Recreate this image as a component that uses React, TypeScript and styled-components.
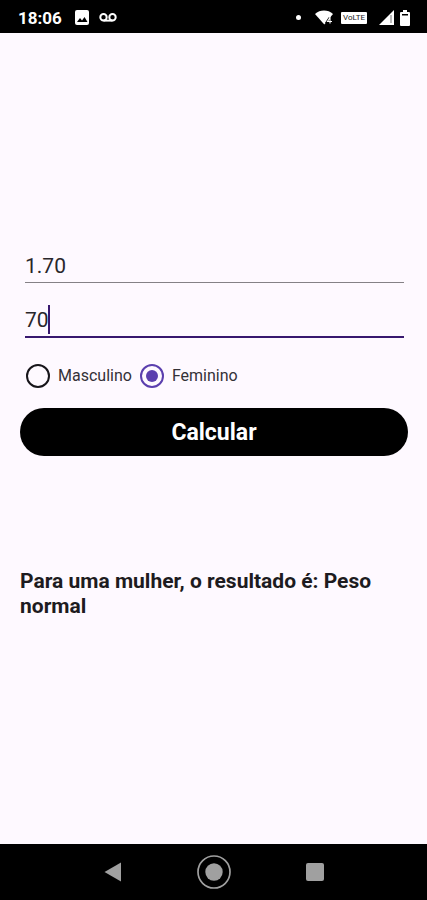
import { useState } from "react";
import styled, { createGlobalStyle } from "styled-components";

const GlobalStyle = createGlobalStyle`
  * { box-sizing: border-box; }
  body {
    margin: 0;
    background: #fef9ff;
    font-family: Roboto, "Liberation Sans", sans-serif;
    color: #1d1b20;
  }
`;

const Screen = styled.div`
  display: flex;
  flex-direction: column;
  min-height: 100vh;
`;

const StatusBar = styled.header`
  display: flex;
  align-items: center;
  justify-content: space-between;
  height: 33px;
  padding: 2px 17px 0 18px;
  background: #000;
  color: #fff;
`;

const StatusGroup = styled.div<{ $gap: number }>`
  display: flex;
  align-items: center;
  gap: ${({ $gap }) => $gap}px;

  svg { display: block; }
`;

const Clock = styled.time`
  font-size: 17px;
  font-weight: 700;
  line-height: 20px;
  margin-right: 3px;
`;

const Dot = styled.span`
  width: 5px;
  height: 5px;
  margin-right: 6px;
  border-radius: 50%;
  background: #fff;
`;

const NetworkBadge = styled.span`
  width: 26px;
  height: 12px;
  margin-right: 4px;
  border-radius: 1px;
  background: #fff;
  color: #222;
  font-size: 8px;
  line-height: 12px;
  text-align: center;
`;

const Form = styled.form`
  display: flex;
  flex: 1;
  flex-direction: column;
  padding: 216px 19px 0 20px;
`;

const Field = styled.div<{ $active?: boolean }>`
  position: relative;
  height: ${({ $active }) => ($active ? 55 : 34)}px;
  margin: 0 4px 0 5px;
  padding-top: ${({ $active }) => ($active ? 22 : 2)}px;
  border-bottom: ${({ $active }) => ($active ? "2px solid #38186f" : "1px solid #858186")};
  font-size: 21px;
  line-height: 31px;
`;

const TextInput = styled.input`
  display: block;
  width: 100%;
  height: 31px;
  padding: 0;
  border: 0;
  outline: 0;
  background: transparent;
  color: #29272b;
  caret-color: transparent;
  font: inherit;
`;

const Caret = styled.span`
  position: absolute;
  top: 22px;
  width: 2px;
  height: 29px;
  margin-left: -1px;
  background: #38186f;
`;

const Options = styled.fieldset`
  display: flex;
  gap: 8px;
  margin: 25px 0 20px;
  padding: 0 6px;
  border: 0;
`;

const Option = styled.label`
  display: flex;
  align-items: center;
  gap: 8px;
  color: #343137;
  font-size: 16px;
  line-height: 25px;
`;

const Radio = styled.input`
  appearance: none;
  display: grid;
  place-items: center;
  width: 24px;
  height: 24px;
  margin: 0;
  border: 2px solid #17151a;
  border-radius: 50%;

  &:checked { border-color: #5b3fae; }

  &:checked::before {
    content: "";
    width: 12px;
    height: 12px;
    border-radius: 50%;
    background: #5b3fae;
  }
`;

const SubmitButton = styled.button`
  height: 48px;
  border: 0;
  border-radius: 24px;
  background: #000;
  color: #fff;
  font: 700 23px/48px Roboto, "Liberation Sans", sans-serif;
`;

const Result = styled.output`
  display: block;
  margin-top: 113px;
  font-size: 21px;
  font-weight: 700;
  line-height: 25px;
`;

const NavBar = styled.nav`
  display: flex;
  align-items: center;
  justify-content: center;
  gap: 67px;
  height: 56px;
  background: #000;
`;

const NavButton = styled.button`
  display: grid;
  place-items: center;
  width: 34px;
  height: 34px;
  padding: 0;
  border: 0;
  background: none;
  color: #a0a0a0;
`;

const PictureIcon = () => (
  <svg width="14" height="15" viewBox="0 0 14 15" aria-hidden="true">
    <rect width="14" height="15" rx="2" fill="#fff" />
    <path d="M2 12l3-4 2 2.5L9.5 7 12.5 12z" fill="#000" />
  </svg>
);

const VoicemailIcon = () => (
  <svg width="18" height="9" viewBox="0 0 18 9" fill="none" stroke="#fff" strokeWidth="2" aria-hidden="true">
    <circle cx="4.5" cy="4.3" r="3.2" />
    <circle cx="13.5" cy="4.3" r="3.2" />
    <path d="M4.5 7.6h9" />
  </svg>
);

const WifiIcon = () => (
  <svg width="18" height="15" viewBox="0 0 18 15" aria-hidden="true">
    <path d="M0 4C5-.6 13-.6 18 4L9.3 14.5z" fill="#fff" />
    <path d="M15 7.5v6M14.7 8l-2.5 3.7H17" fill="none" stroke="#000" strokeWidth="2.4" />
    <path d="M15 13.5V7.5L12.5 11.5H17" fill="none" stroke="#fff" strokeWidth="1.1" />
  </svg>
);

const SignalIcon = () => (
  <svg width="15" height="15" viewBox="0 0 15 15" aria-hidden="true">
    <path d="M15 0v15H0z" fill="#fff" />
    <path d="M12 5v8" stroke="#777" />
  </svg>
);

const BatteryIcon = () => (
  <svg width="10" height="16" viewBox="0 0 10 16" aria-hidden="true">
    <path d="M3 0h4v2h2q1 0 1 1v12q0 1-1 1H1q-1 0-1-1V3q0-1 1-1h2z" fill="#fff" />
    <path d="M2 4h6v1.5H2z" fill="#000" />
  </svg>
);

export default function App() {
  const [height, setHeight] = useState("1.70");
  const [weight, setWeight] = useState("70");
  const [sex, setSex] = useState("Feminino");
  const [result, setResult] = useState("Para uma mulher, o resultado é: Peso normal");

  const calculate = () => {
    const bmi = Number(weight) / Number(height) ** 2;
    const female = sex === "Feminino";
    const low = female ? 19.1 : 20.7;
    const high = female ? 25.8 : 26.4;
    const category = bmi < low ? "Abaixo do peso" : bmi < high ? "Peso normal" : "Acima do peso";
    setResult(`Para ${female ? "uma mulher" : "um homem"}, o resultado é: ${category}`);
  };

  return (
    <Screen>
      <GlobalStyle />
      <StatusBar>
        <StatusGroup $gap={10}>
          <Clock>18:06</Clock>
          <PictureIcon />
          <VoicemailIcon />
        </StatusGroup>
        <StatusGroup $gap={8}>
          <Dot />
          <WifiIcon />
          <NetworkBadge>VoLTE</NetworkBadge>
          <StatusGroup $gap={6}>
            <SignalIcon />
            <BatteryIcon />
          </StatusGroup>
        </StatusGroup>
      </StatusBar>
      <Form onSubmit={(e) => { e.preventDefault(); calculate(); }}>
        <Field>
          <TextInput aria-label="Altura" inputMode="decimal" value={height} onChange={(e) => setHeight(e.target.value)} />
        </Field>
        <Field $active>
          <TextInput aria-label="Peso" inputMode="decimal" value={weight} onChange={(e) => setWeight(e.target.value)} />
          <Caret style={{ left: `${weight.length}ch` }} />
        </Field>
        <Options aria-label="Sexo">
          {["Masculino", "Feminino"].map((name) => (
            <Option key={name}>
              <Radio type="radio" name="sexo" checked={sex === name} onChange={() => setSex(name)} />
              {name}
            </Option>
          ))}
        </Options>
        <SubmitButton type="submit">Calcular</SubmitButton>
        <Result>{result}</Result>
      </Form>
      <NavBar>
        <NavButton type="button" aria-label="Voltar">
          <svg width="18" height="20" viewBox="0 0 18 20" aria-hidden="true">
            <path d="M17 .5v19L.5 10z" fill="currentColor" />
          </svg>
        </NavButton>
        <NavButton type="button" aria-label="Início">
          <svg width="34" height="34" viewBox="0 0 34 34" aria-hidden="true">
            <circle cx="17" cy="17" r="16" fill="none" stroke="currentColor" strokeWidth="1.7" />
            <circle cx="17" cy="17" r="8.7" fill="currentColor" />
          </svg>
        </NavButton>
        <NavButton type="button" aria-label="Recentes">
          <svg width="18" height="18" viewBox="0 0 18 18" aria-hidden="true">
            <rect width="18" height="18" rx="2" fill="currentColor" />
          </svg>
        </NavButton>
      </NavBar>
    </Screen>
  );
}
